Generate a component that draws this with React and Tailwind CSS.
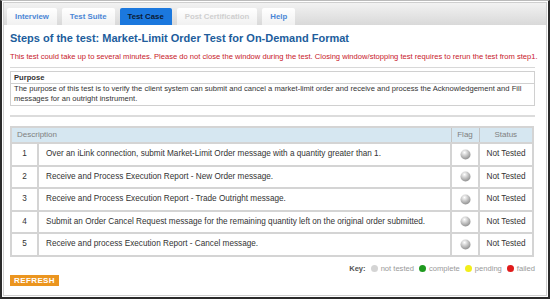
import React from 'react';

const tabs = [
    { label: 'Interview', state: 'normal' },
    { label: 'Test Suite', state: 'normal' },
    { label: 'Test Case', state: 'active' },
    { label: 'Post Certification', state: 'disabled' },
    { label: 'Help', state: 'normal' },
];

const steps = [
    'Over an iLink connection, submit Market-Limit Order message with a quantity greater than 1.',
    'Receive and Process Execution Report - New Order message.',
    'Receive and Process Execution Report - Trade Outright message.',
    'Submit an Order Cancel Request message for the remaining quantity left on the original order submitted.',
    'Receive and process Execution Report - Cancel message.',
];

const Sphere = () => (
    <svg width="11" height="11" viewBox="0 0 11 11">
        <defs>
            <radialGradient id="sph" cx="0.4" cy="0.3" r="0.75">
                <stop offset="0" stopColor="#ffffff" />
                <stop offset="0.5" stopColor="#c4c4c4" />
                <stop offset="1" stopColor="#8a8a8a" />
            </radialGradient>
        </defs>
        <circle cx="5.5" cy="5.5" r="5" fill="url(#sph)" />
    </svg>
);

const Dot = ({ color }) => (
    <span className={`inline-block w-[7px] h-[7px] rounded-full mr-[3px] ${color}`} />
);

export default function App() {
    return (
        <div
            className="w-[550px] h-[299px] bg-white border-l-2 border-r-2 border-b-2 border-[#2b2b2b] border-t border-t-[#bbbbbb] p-[1px] overflow-hidden"
            style={{ fontFamily: '"Liberation Sans", Arial, sans-serif' }}
        >
            <div className="h-full border border-[#cfcfcf] flex flex-col">
                {/* Tabs */}
                <div className="h-[22px] bg-gradient-to-b from-[#f2f2f2] to-[#d9d9d9] flex items-end gap-[5px] pl-[3px] shrink-0">
                    {tabs.map((t) => (
                        <div
                            key={t.label}
                            className={`h-[17px] px-[8px] flex items-center text-[7.8px] font-bold rounded-t-[2px] ${
                                t.state === 'active'
                                    ? 'bg-[#1b78de] text-[#0a1a33]'
                                    : t.state === 'disabled'
                                    ? 'bg-gradient-to-b from-white to-[#f1f1f1] text-[#cfcfcf]'
                                    : 'bg-gradient-to-b from-white to-[#f1f1f1] text-[#4a86d6]'
                            }`}
                        >
                            {t.label}
                        </div>
                    ))}
                </div>

                <div className="px-[6px] flex flex-col">
                    {/* Title */}
                    <h1 className="mt-[6px] text-[11px] leading-[14px] font-bold text-[#215d9c]">
                        Steps of the test: Market-Limit Order Test for On-Demand Format
                    </h1>

                    {/* Warning */}
                    <p className="mt-[7px] text-[7.6px] leading-[10px] text-[#c8202a]">
                        This test could take up to several minutes. Please do not close the window during the test. Closing window/stopping test requires to rerun the test from step1.
                    </p>

                    <div className="mt-[5px] border-t border-[#d8d8d8] mr-[5px]" />

                    {/* Purpose */}
                    <div className="mt-[3px] border border-[#d0d0d0] mr-[5px]">
                        <div className="px-[3px] h-[12px] flex items-center text-[7.6px] font-bold text-[#333] border-b border-[#d0d0d0]">
                            Purpose
                        </div>
                        <div className="px-[3px] pb-[1px] text-[7.6px] leading-[10px] text-[#333]">
                            The purpose of this test is to verify the client system can submit and cancel a market-limit order and receive and process the Acknowledgement and Fill messages for an outright instrument.
                        </div>
                    </div>

                    <div className="mt-[9px] border-t-2 border-[#dcdcdc] mr-[5px]" />

                    {/* Steps table */}
                    <table className="mt-[9px] mr-[5px] border-collapse border-2 border-[#d4d4d4] text-[8.2px] text-[#333]" style={{ width: 524 }}>
                        <thead>
                            <tr className="bg-[#d6e7f1] h-[16px]">
                                <th colSpan={2} className="text-left font-normal text-[8px] text-[#808080] px-[5px] border border-[#c4c4c4]">
                                    Description
                                </th>
                                <th className="w-[28px] font-normal text-[8px] text-[#808080] border border-[#c4c4c4]">Flag</th>
                                <th className="w-[54px] font-normal text-[8px] text-[#808080] border border-[#c4c4c4]">Status</th>
                            </tr>
                        </thead>
                        <tbody>
                            {steps.map((s, i) => (
                                <tr key={i} className="h-[22.5px]">
                                    <td className="w-[27px] text-center border-2 border-[#d4d4d4]">{i + 1}</td>
                                    <td className="px-[7px] border-2 border-[#d4d4d4]">{s}</td>
                                    <td className="border-2 border-[#d4d4d4]">
                                        <div className="flex justify-center">
                                            <Sphere />
                                        </div>
                                    </td>
                                    <td className="text-center border-2 border-[#d4d4d4]">Not Tested</td>
                                </tr>
                            ))}
                        </tbody>
                    </table>

                    {/* Key */}
                    <div className="mt-[7px] h-[10px] mr-[5px] flex justify-end items-center gap-[5px] text-[7.6px] text-[#999]">
                        <span className="font-bold text-[#555]">Key:</span>
                        <span className="flex items-center"><Dot color="bg-[#d4d4d4]" />not tested</span>
                        <span className="flex items-center"><Dot color="bg-[#1f9a1f]" />complete</span>
                        <span className="flex items-center"><Dot color="bg-[#f2ee1a]" />pending</span>
                        <span className="flex items-center"><Dot color="bg-[#e01b1b]" />failed</span>
                    </div>

                    {/* Refresh */}
                    <div className="mt-[1px] flex">
                        <button className="h-[11px] px-[4px] bg-[#eb951f] text-white text-[8px] font-bold leading-[11px] tracking-[0.4px]">
                            REFRESH
                        </button>
                    </div>
                </div>
            </div>
        </div>
    );
}
